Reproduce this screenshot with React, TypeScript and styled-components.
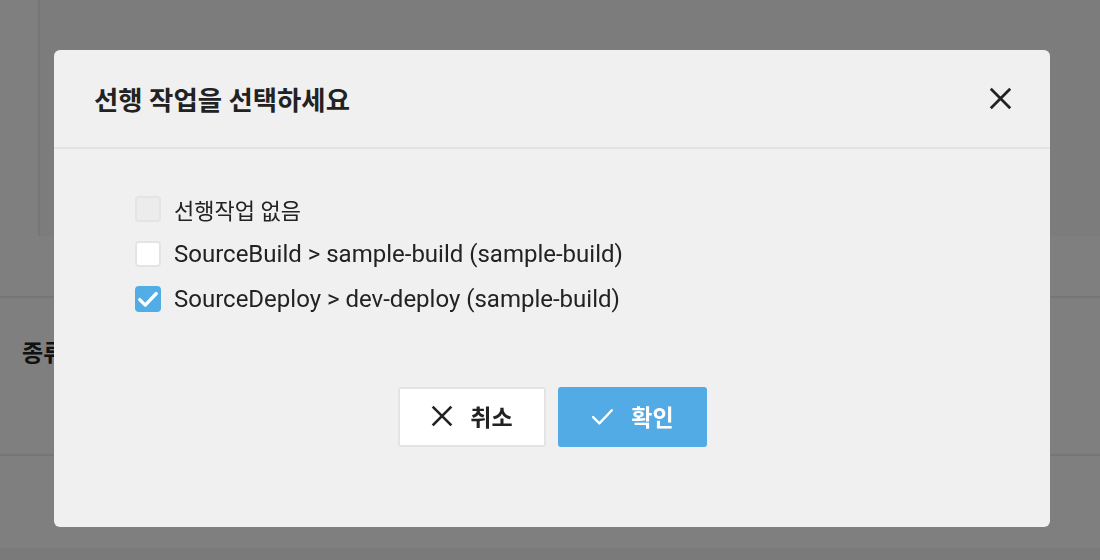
import React from 'react'
import styled, { createGlobalStyle } from 'styled-components'

const GlobalStyle = createGlobalStyle`
  html, body {
    margin: 0;
    padding: 0;
    background: #fff;
    font-family: Roboto, "Noto Sans CJK KR", sans-serif;
    overflow: hidden;
  }
`

const Page = styled.div`
  width: 1100px;
  height: 560px;
  display: flex;
  flex-direction: column;
  background: #fff;
`

const TopArea = styled.div`
  height: 236px;
  display: flex;
`

const TopGutter = styled.div`
  width: 38px;
`

const TopPanel = styled.div`
  flex: 1;
  background: #f8f8f8;
  border-left: 2px solid #ececec;
`

const Spacer = styled.div<{ $h: number }>`
  height: ${(p) => p.$h}px;
  border-bottom: 2px solid #ececec;
`

const FieldRow = styled.div`
  height: 120px;
  padding: 36px 0 0 22px;
  border-bottom: 2px solid #ececec;
  font-size: 23px;
  font-weight: 700;
  color: #222;
`

const BottomFill = styled.div`
  flex: 1;
  border-bottom: 12px solid #f4f4f4;
`

const Overlay = styled.div`
  position: fixed;
  inset: 0;
  background: rgba(0, 0, 0, 0.5);
  display: flex;
  align-items: flex-start;
  padding: 50px 0 0 54px;
`

const Modal = styled.div`
  width: 996px;
  height: 477px;
  background: #f0f0f0;
  border-radius: 6px;
  display: flex;
  flex-direction: column;
`

const Header = styled.div`
  height: 97px;
  display: flex;
  align-items: center;
  justify-content: space-between;
  padding: 0 36px 0 40px;
  border-bottom: 2px solid #e3e3e3;
`

const Title = styled.h2`
  margin: 0;
  font-size: 26.4px;
  font-weight: 700;
  color: #222;
`

const CloseButton = styled.button`
  border: none;
  background: none;
  padding: 0;
  width: 28px;
  height: 28px;
  display: flex;
  align-items: center;
  justify-content: center;
  color: #222;
`

const Body = styled.div`
  flex: 1;
  display: flex;
  flex-direction: column;
  padding: 37px 0 0 81px;
`

const OptionList = styled.div`
  display: flex;
  flex-direction: column;
`

const Option = styled.label<{ $size: number }>`
  height: 45px;
  display: flex;
  align-items: center;
  gap: 13px;
  font-size: ${(p) => p.$size}px;
  color: #222;
`

const Box = styled.span<{ $state: 'disabled' | 'empty' | 'checked' }>`
  width: 26px;
  height: 26px;
  box-sizing: border-box;
  border-radius: 4px;
  display: flex;
  align-items: center;
  justify-content: center;
  color: #fff;
  background: ${(p) =>
    p.$state === 'checked' ? '#52ace6' : p.$state === 'disabled' ? '#ececec' : '#fff'};
  border: ${(p) => (p.$state === 'checked' ? 'none' : '2px solid #e4e4e4')};
`

const Footer = styled.div`
  display: flex;
  justify-content: center;
  gap: 12px;
  margin: 66px 0 0 -81px;
`

const Button = styled.button<{ $primary?: boolean }>`
  width: ${(p) => (p.$primary ? 149 : 148)}px;
  height: 60px;
  box-sizing: border-box;
  border-radius: 3px;
  border: ${(p) => (p.$primary ? 'none' : '2px solid #e4e4e4')};
  background: ${(p) => (p.$primary ? '#52abe4' : '#fff')};
  color: ${(p) => (p.$primary ? '#fff' : '#222')};
  display: flex;
  align-items: center;
  justify-content: center;
  gap: 16px;
  font-family: inherit;
  font-size: 23px;
  font-weight: 700;
  padding: 0 0 2px 0;
`

const XIcon = ({ size }: { size: number }) => (
  <svg width={size} height={size} viewBox="0 0 20 20" fill="none">
    <path d="M3 3 L17 17 M17 3 L3 17" stroke="currentColor" strokeWidth="2.2" strokeLinecap="square" />
  </svg>
)

const CheckIcon = ({ size, width }: { size: number; width: number }) => (
  <svg width={size} height={size} viewBox="0 0 20 20" fill="none">
    <path d="M2.5 10.5 L7.5 15.5 L17.5 5" stroke="currentColor" strokeWidth={width} strokeLinecap="round" strokeLinejoin="round" />
  </svg>
)

const options: { label: string; state: 'disabled' | 'empty' | 'checked'; size: number }[] = [
  { label: '선행작업 없음', state: 'disabled', size: 22 },
  { label: 'SourceBuild > sample-build (sample-build)', state: 'empty', size: 24 },
  { label: 'SourceDeploy > dev-deploy (sample-build)', state: 'checked', size: 24 },
]

export default function App() {
  return (
    <>
      <GlobalStyle />
      <Page>
        <TopArea>
          <TopGutter />
          <TopPanel />
        </TopArea>
        <Spacer $h={60} />
        <FieldRow>종류</FieldRow>
        <BottomFill />
      </Page>
      <Overlay>
        <Modal>
          <Header>
            <Title>선행 작업을 선택하세요</Title>
            <CloseButton aria-label="close">
              <XIcon size={25} />
            </CloseButton>
          </Header>
          <Body>
            <OptionList>
              {options.map((o) => (
                <Option key={o.label} $size={o.size}>
                  <Box $state={o.state}>
                    {o.state === 'checked' && <CheckIcon size={22} width={3} />}
                  </Box>
                  {o.label}
                </Option>
              ))}
            </OptionList>
            <Footer>
              <Button>
                <XIcon size={24} />
                취소
              </Button>
              <Button $primary>
                <CheckIcon size={25} width={1.9} />
                확인
              </Button>
            </Footer>
          </Body>
        </Modal>
      </Overlay>
    </>
  )
}
